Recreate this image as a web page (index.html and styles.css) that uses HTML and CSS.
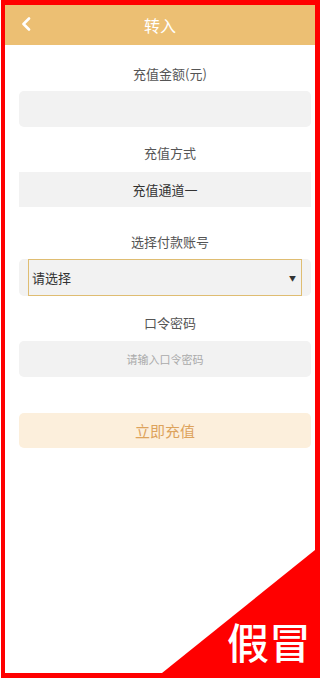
FILE: index.html
```html
<!DOCTYPE html>
<html lang="zh-CN">
<head>
    <meta charset="UTF-8">
    <meta name="viewport" content="width=device-width, initial-scale=1.0">
    <title>转入</title>
    <link rel="stylesheet" href="styles.css">
</head>
<body>
    <div class="frame">
        <div class="page">
            <div class="header">
                <svg class="back" width="10" height="14" viewBox="0 0 10 14">
                    <path d="M8 1.5 L2.5 7 L8 12.5" fill="none" stroke="#fff" stroke-width="2.6" stroke-linecap="round" stroke-linejoin="round"/>
                </svg>
                <span class="title">转入</span>
            </div>

            <div class="form">
                <div class="group g1">
                    <div class="label">充值金额(元)</div>
                    <div class="field"></div>
                </div>
                <div class="group g2">
                    <div class="label">充值方式</div>
                    <div class="field flat">充值通道一</div>
                </div>
                <div class="group g3">
                    <div class="label">选择付款账号</div>
                    <div class="field select-wrap">
                        <div class="select">
                            <span>请选择</span>
                            <span class="arrow">▼</span>
                        </div>
                    </div>
                </div>
                <div class="group g4">
                    <div class="label">口令密码</div>
                    <div class="field placeholder">请输入口令密码</div>
                </div>
                <div class="submit">立即充值</div>
            </div>

            <svg class="corner" width="153" height="123" viewBox="0 0 153 123">
                <polygon points="0,123 153,0 153,123" fill="#ff0000"/>
            </svg>
            <div class="stamp">假冒</div>
        </div>
    </div>
</body>
</html>
```

FILE: styles.css
```css
body {
    margin: 0;
    padding: 0;
    font-family: 'Noto Sans CJK SC', 'Noto Sans', sans-serif;
    background: #fff;
    color: #333;
}
.frame {
    margin-left: 1px;
    width: 319px;
    height: 678px;
    box-sizing: border-box;
    border: 5px solid #ff0000;
    border-left-width: 4px;
}
.page {
    position: relative;
    height: 100%;
    background: #fff;
    overflow: hidden;
}
.header {
    height: 40px;
    background: #ecbf73;
    display: flex;
    align-items: center;
    justify-content: center;
    position: relative;
}
.back {
    position: absolute;
    left: 16px;
    top: 12px;
}
.title {
    color: #fff;
    font-size: 16px;
}
.form {
    padding: 0 4px 0 14px;
}
.label {
    font-size: 13px;
    line-height: 20px;
    color: #555;
    text-align: center;
    padding-left: 10px;
    margin-bottom: 7px;
}
.field {
    height: 36px;
    background: #f2f2f2;
    border-radius: 5px;
    display: flex;
    align-items: center;
    justify-content: center;
    font-size: 13px;
}
.g1 { margin-top: 19px; }
.g2 { margin-top: 16px; }
.g2 .label { margin-bottom: 9px; }
.g3 { margin-top: 25px; }
.g4 { margin-top: 17px; }
.g4 .label { margin-bottom: 8px; }
.flat {
    height: 35px;
    border-radius: 0;
    color: #333;
}
.select-wrap {
    height: 37px;
    padding: 0 9px;
    justify-content: stretch;
}
.select {
    flex: 1;
    height: 100%;
    box-sizing: border-box;
    border: 1px solid #dfbd72;
    display: flex;
    align-items: center;
    justify-content: space-between;
    padding: 0 5px 0 3px;
    font-size: 13px;
    color: #333;
}
.arrow {
    font-size: 7px;
    color: #333;
}
.placeholder {
    font-size: 11px;
    color: #aaa;
}
.submit {
    margin-top: 36px;
    height: 35px;
    border-radius: 5px;
    background: #fcefdc;
    color: #dda35c;
    font-size: 15px;
    display: flex;
    align-items: center;
    justify-content: center;
}
.corner {
    position: absolute;
    right: 0;
    bottom: 0;
}
.stamp {
    position: absolute;
    right: 4px;
    bottom: 11px;
    color: #fff;
    font-size: 42px;
    font-weight: 500;
    line-height: 1;
}
```
